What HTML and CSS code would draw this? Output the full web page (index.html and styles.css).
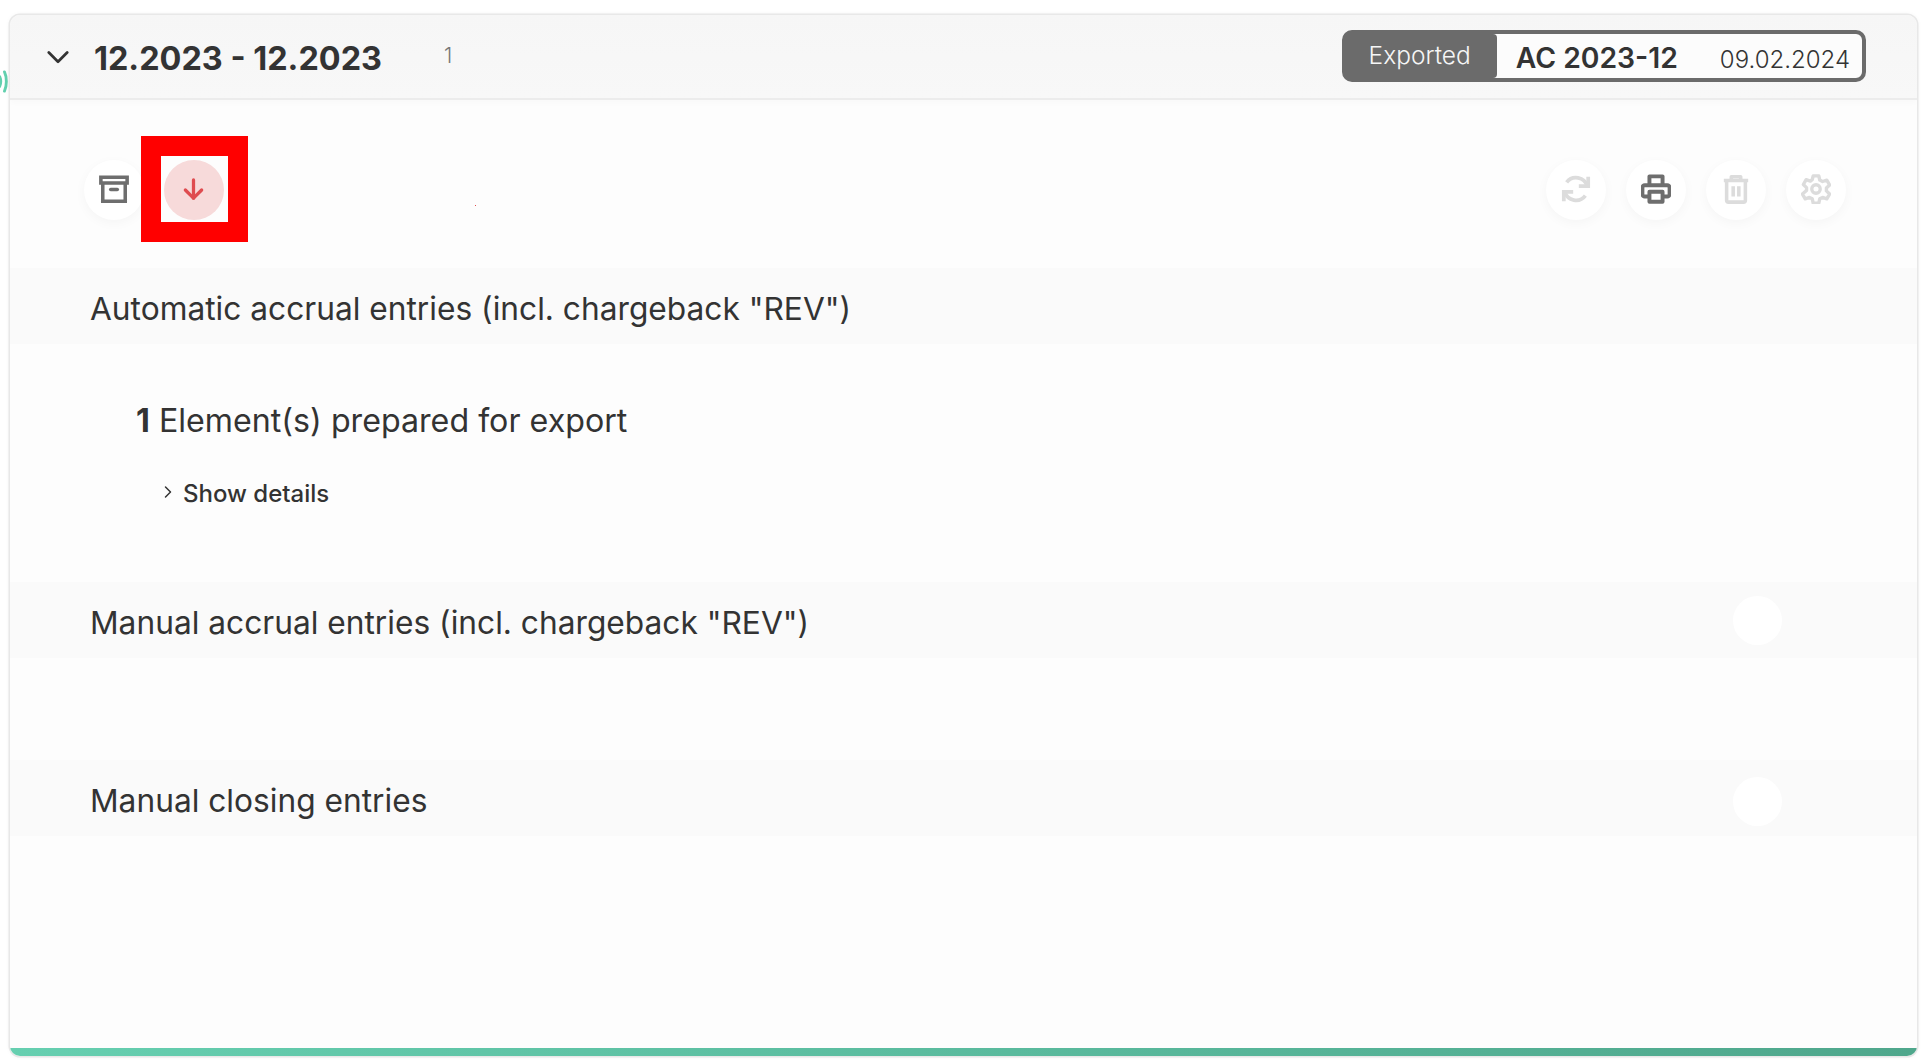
FILE: index.html
```html
<!DOCTYPE html>
<html lang="en">
<head>
    <meta charset="UTF-8">
    <title>Closing periods</title>
    <link rel="stylesheet" href="styles.css">
</head>
<body>
    <svg class="signal" viewBox="0 0 9 24" fill="none" stroke="#62d0ae" stroke-width="3" stroke-linecap="round">
        <path d="M0 7c1.600 3.600 1.600 6.400 0 10"></path>
        <path d="M5 2c2.600 5.400 2.600 14.600 0 20"></path>
    </svg>
    <div class="card">
        <header class="card-header">
            <svg class="chevron" viewBox="0 0 24 24" fill="none" stroke="#333" stroke-width="3" stroke-linecap="round" stroke-linejoin="round">
                <path d="M2 6l10 10L22 6"></path>
            </svg>
            <h1 class="period">12.2023 - 12.2023</h1>
            <span class="count">1</span>
            <div class="status">
                <span class="status-label">Exported</span>
                <span class="status-name">AC 2023-12</span>
                <span class="status-date">09.02.2024</span>
            </div>
        </header>

        <div class="toolbar">
            <div class="tool-group">
                <button class="tool">
                    <svg viewBox="0 0 32 32" fill="none" stroke="#6e6e6e" stroke-width="3.800">
                        <path d="M2 3.500h28v6H2z"></path>
                        <path d="M4 9.500v19.500h24V9.500"></path>
                        <path d="M12.500 16.500h7" stroke-linecap="round"></path>
                    </svg>
                </button>
                <div class="tool-focus">
                    <button class="tool tool-danger">
                        <svg viewBox="0 0 24 24" fill="none" stroke="#df4c50" stroke-width="3.400" stroke-linecap="round" stroke-linejoin="round">
                            <path d="M12 2v19"></path>
                            <path d="M3.500 12.500l8.500 8.500 8.500-8.500"></path>
                        </svg>
                    </button>
                </div>
            </div>
            <div class="tool-group">
                <button class="tool">
                    <svg viewBox="0 0 32 32" fill="none" stroke="#dcdcdc" stroke-width="4">
                        <path d="M28 13A12.500 12.500 0 0 0 6 9"></path>
                        <path d="M4 19a12.500 12.500 0 0 0 22 4"></path>
                        <path d="M29 3v10H19" stroke-linejoin="miter"></path>
                        <path d="M3 29V19h10" stroke-linejoin="miter"></path>
                    </svg>
                </button>
                <button class="tool">
                    <svg viewBox="0 0 32 32" fill="none" stroke="#6e6e6e" stroke-width="4.200" stroke-linejoin="round">
                        <path d="M9 12V2.500h14V12"></path>
                        <path d="M8 24H4a2.500 2.500 0 0 1-2.500-2.500V14.500A2.500 2.500 0 0 1 4 12h24a2.500 2.500 0 0 1 2.500 2.500v7A2.500 2.500 0 0 1 28 24h-4"></path>
                        <path d="M9 19h14v10.500H9z"></path>
                    </svg>
                </button>
                <button class="tool">
                    <svg viewBox="0 0 32 32" fill="none" stroke="#dcdcdc" stroke-width="3.800" stroke-linejoin="round">
                        <path d="M3 7h26"></path>
                        <path d="M11 7V3h10v4"></path>
                        <path d="M6 7v21a2 2 0 0 0 2 2h16a2 2 0 0 0 2-2V7"></path>
                        <path d="M13 13v11M19 13v11"></path>
                    </svg>
                </button>
                <button class="tool">
                    <svg viewBox="0 0 32 32" fill="none" stroke="#dcdcdc" stroke-width="3.600" stroke-linejoin="round">
                        <path d="M13 2h6l1 4.500 3 1.500 4.500-1.500 3 5.200-3.400 3.300v3l3.400 3.300-3 5.200-4.500-1.500-3 1.500-1 4.500h-6l-1-4.500-3-1.500-4.500 1.500-3-5.200L5.900 17.500v-3L2.500 11.200l3-5.200L10 7.500l2-1.500z"></path>
                        <circle cx="16" cy="16" r="4.500"></circle>
                    </svg>
                </button>
            </div>
        </div>
        <span class="speck"></span>

        <section class="entry-row">
            <h2>Automatic accrual entries (incl. chargeback "REV")</h2>
        </section>
        <div class="entry-body">
            <p class="prepared"><strong>1</strong> Element(s) prepared for export</p>
            <a class="details" href="#">
                <svg viewBox="0 0 8 14" fill="none" stroke="#333" stroke-width="1.500" stroke-linecap="round" stroke-linejoin="round">
                    <path d="M1.500 2l5 5-5 5"></path>
                </svg>
                Show details
            </a>
        </div>

        <section class="entry-row">
            <h2>Manual accrual entries (incl. chargeback "REV")</h2>
            <span class="row-dot"></span>
        </section>
        <div class="entry-gap"></div>

        <section class="entry-row">
            <h2>Manual closing entries</h2>
            <span class="row-dot row-dot-low"></span>
        </section>

        <div class="card-foot"></div>
    </div>
</body>
</html>
```

FILE: styles.css
```css
* {
    box-sizing: border-box;
}
body {
    margin: 0;
    height: 1060px;
    padding: 15px 13px 4px 10px;
    background-color: #fff;
    color: #333;
    font-family: Inter, "Liberation Sans", sans-serif;
    overflow: hidden;
}
.signal {
    position: absolute;
    left: -1px;
    top: 70px;
    width: 10px;
    height: 23px;
}
.card {
    position: relative;
    display: flex;
    flex-direction: column;
    height: 100%;
    background: #fdfdfd;
    border-radius: 10px;
    box-shadow: 0 0 0 1.500px #e8e8e8, 0 0 5px rgba(0, 0, 0, 0.08);
    overflow: hidden;
}
.card-header {
    display: flex;
    align-items: center;
    flex: 0 0 85px;
    padding: 0 51px 2px 37px;
    background: linear-gradient(#f6f6f6, #f8f8f8);
    border-bottom: 2px solid #ececec;
    box-shadow: 0 3px 6px rgba(0, 0, 0, 0.02);
}
.chevron {
    width: 22px;
    height: 22px;
    margin-top: 5px;
}
.period {
    margin: 8px 0 0 25px;
    font-size: 32.400px;
    font-weight: 700;
    line-height: 1;
}
.count {
    margin: 0 0 0 62px;
    color: #777;
    font-size: 21px;
    font-weight: 300;
}
.status {
    display: flex;
    align-items: center;
    height: 52px;
    margin-left: auto;
    background: #fcfcfc;
    border: 4px solid #6b6b6b;
    border-radius: 10px;
}
.status-label {
    display: flex;
    align-items: center;
    align-self: stretch;
    padding: 0 26px 2px 24px;
    margin-left: -1px;
    background: #6b6b6b;
    border-radius: 0 4px 4px 0;
    color: #f6f6f6;
    font-size: 24.500px;
    font-weight: 300;
}
.status-name {
    margin: 5px 0 0 19px;
    font-size: 28.300px;
    font-weight: 600;
}
.status-date {
    margin: 8px 12px 0 42px;
    font-size: 24px;
    font-weight: 300;
}
.toolbar {
    display: flex;
    justify-content: space-between;
    flex: 0 0 168px;
    padding: 60px 71px 0 74px;
}
.tool-group {
    display: flex;
    gap: 20px;
    height: 60px;
}
.tool {
    display: flex;
    align-items: center;
    justify-content: center;
    width: 60px;
    height: 60px;
    padding: 0 0 2px;
    background: #fff;
    border: 0;
    border-radius: 50%;
    box-shadow: 0 3px 12px rgba(0, 0, 0, 0.035);
}
.tool svg {
    width: 30px;
    height: 30px;
}
.tool-danger {
    padding-right: 2px;
    background: #f7dada;
    box-shadow: none;
}
.tool-danger svg {
    width: 23px;
    height: 23px;
}
/* red highlight drawn on top of the screenshot */
.tool-focus {
    position: relative;
    width: 60px;
    height: 60px;
}
.tool-focus::after {
    content: "";
    position: absolute;
    left: -23px;
    top: -24px;
    box-sizing: border-box;
    width: 107px;
    height: 106px;
    border: 20px solid #f00;
}
.speck {
    position: absolute;
    left: 465px;
    top: 190px;
    width: 1px;
    height: 1px;
    background: #e25050;
}
.entry-row {
    display: flex;
    align-items: center;
    justify-content: space-between;
    flex: 0 0 76px;
    padding: 0 135px 0 80px;
    background: #fafafa;
}
.entry-row h2 {
    margin: 5px 0 0;
    font-size: 31.700px;
    font-weight: 400;
}
.row-dot {
    width: 49px;
    height: 49px;
    background: #fff;
    border-radius: 50%;
}
.row-dot-low {
    margin-top: 6px;
}
.entry-body {
    flex: 0 0 238px;
    padding: 58px 0 0 126px;
}
.prepared {
    margin: 0;
    font-size: 32.200px;
    line-height: 38px;
}
.details {
    display: flex;
    align-items: center;
    gap: 11px;
    margin: 39px 0 0 28px;
    color: #333;
    font-size: 24px;
    font-weight: 450;
    text-decoration: none;
}
.details svg {
    width: 8px;
    height: 14px;
    margin-top: -3px;
}
.entry-gap {
    flex: 0 0 102px;
}
.card-foot {
    margin-top: auto;
    flex: 0 0 8px;
    background: linear-gradient(90deg, #66cfb0, #4fa78c);
}
```
